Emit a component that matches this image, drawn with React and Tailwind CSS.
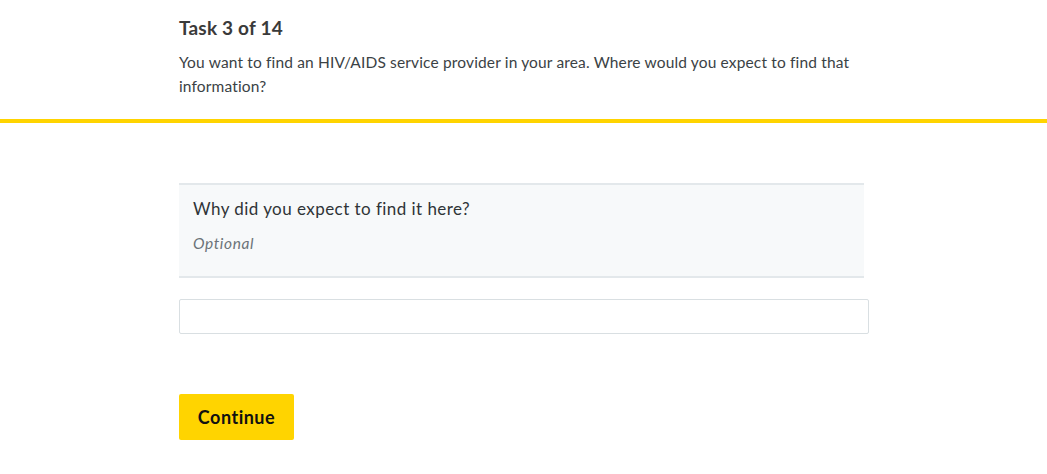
export default function App() {
  return (
    <div className="min-h-screen bg-white font-['Lato',sans-serif] text-[#3b4245]">
      <header className="border-b-4 border-[#ffd400] pt-[15px] pb-[21px]">
        <div className="ml-[179px] w-[690px]">
          <h1 className="text-[19px] font-bold leading-[26px] tracking-[0.2px] text-[#3a3a3a]">Task 3 of 14</h1>
          <p className="mt-[9px] text-[15.5px] leading-[24px] tracking-[0.15px]">
            You want to find an HIV/AIDS service provider in your area. Where would you expect to find that information?
          </p>
        </div>
      </header>

      <main className="ml-[179px] w-[690px] pt-[60px]">
        <div className="mr-[5px] border-y-2 border-[#e3e8eb] bg-[#f7f9fa] px-[14px] pt-[13px] pb-[23px]">
          <p className="text-[17px] leading-[22px] tracking-[0.45px] text-[#2f3437]">Why did you expect to find it here?</p>
          <p className="mt-[13px] text-[15.5px] italic leading-[20px] tracking-[0.6px] text-[#6b7378]">Optional</p>
        </div>

        <input
          type="text"
          className="mt-[21px] block h-[35px] w-full rounded-[2px] border border-[#d9dfe2] bg-white px-2 text-[15px] outline-none"
        />

        <button className="mt-[60px] h-[46px] w-[115px] rounded-[2px] bg-[#ffd400] text-[18px] font-bold tracking-[0.5px] text-[#111]">
          Continue
        </button>
      </main>
    </div>
  );
}
